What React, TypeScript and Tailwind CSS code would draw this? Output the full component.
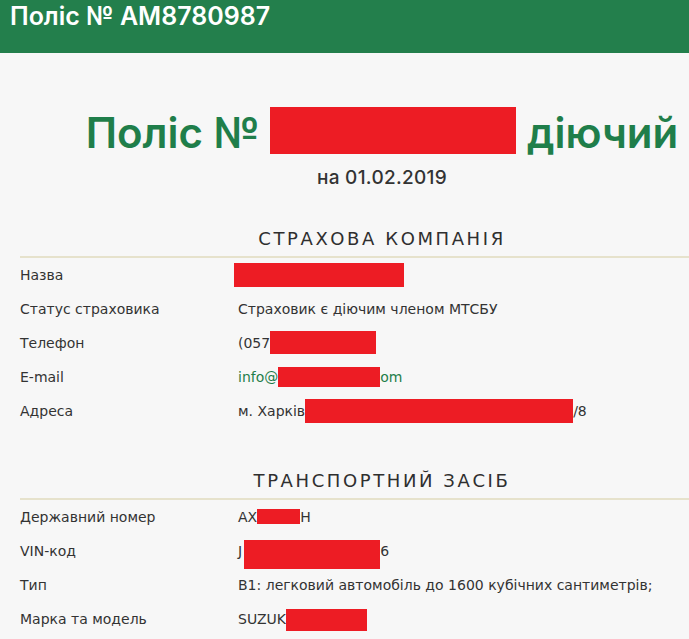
import React from "react";

const Red = ({ w, h, dy = 0 }: { w: number; h: number; dy?: number }) => (
  <span
    className="inline-block bg-[#ed1c24] align-middle"
    style={{ width: w, height: h, transform: `translateY(${dy}px)` }}
  />
);

const Row = ({ label, children }: { label: string; children: React.ReactNode }) => (
  <div className="flex h-[34px] items-center text-[14px] text-[#333]">
    <div className="w-[218px] shrink-0">{label}</div>
    <div className="flex items-center whitespace-nowrap">{children}</div>
  </div>
);

const SectionTitle = ({ children }: { children: React.ReactNode }) => (
  <>
    <div className="flex h-[36px] items-center justify-center text-[18px] font-medium tracking-[2.6px] text-[#2f2f2f]">
      {children}
    </div>
    <div className="h-[2px] bg-[#e6e2cc]" />
  </>
);

const inter = { fontFamily: 'Inter, "DejaVu Sans", sans-serif' };

export default function App() {
  return (
    <div
      className="h-[639px] w-[689px] overflow-hidden bg-[#f7f7f7]"
      style={{ fontFamily: '"DejaVu Sans", sans-serif' }}
    >
      <div className="h-[53px] bg-[#237f4c] pl-[10px]">
        <div className="text-[25px] font-semibold leading-[32px] text-white" style={inter}>
          Поліс № AM8780987
        </div>
      </div>
      <div className="ml-[20px] w-[724px]">
        <h1
          className="mt-[56px] flex h-[48px] items-center justify-center whitespace-nowrap text-[42px] font-semibold leading-[48px] text-[#1f7e4a]"
          style={inter}
        >
          <span>Поліс №&nbsp;</span>
          <Red w={246} h={47} dy={-3} />
          <span>&nbsp;діючий</span>
        </h1>
        <div
          className="mt-[9px] h-[24px] text-center text-[19px] font-medium leading-[24px] tracking-[0.3px] text-[#333]"
          style={inter}
        >
          на 01.02.2019
        </div>
        <div className="mt-[30px]">
          <SectionTitle>СТРАХОВА КОМПАНІЯ</SectionTitle>
          <Row label="Назва">
            <span className="-ml-[4px]"><Red w={170} h={24} /></span>
          </Row>
          <Row label="Статус страховика">Страховик є діючим членом МТСБУ</Row>
          <Row label="Телефон">
            <span>(057</span>
            <Red w={106} h={23} dy={-1} />
          </Row>
          <Row label="E-mail">
            <span className="text-[#1f7e4a]">info@</span>
            <Red w={102} h={20} />
            <span className="text-[#1f7e4a]">om</span>
          </Row>
          <Row label="Адреса">
            <span>м. Харків</span>
            <Red w={268} h={24} />
            <span>/8</span>
          </Row>
        </div>
        <div className="mt-[34px]">
          <SectionTitle>ТРАНСПОРТНИЙ ЗАСІБ</SectionTitle>
          <Row label="Державний номер">
            <span>AX</span>
            <Red w={43} h={15} dy={-1} />
            <span>H</span>
          </Row>
          <Row label="VIN-код">
            <span>J</span>
            <span className="ml-[2px]"><Red w={136} h={29} dy={3} /></span>
            <span>6</span>
          </Row>
          <Row label="Тип">B1: легковий автомобіль до 1600 кубічних сантиметрів;</Row>
          <Row label="Марка та модель">
            <span>SUZUK</span>
            <Red w={81} h={22} dy={1} />
          </Row>
        </div>
      </div>
    </div>
  );
}
